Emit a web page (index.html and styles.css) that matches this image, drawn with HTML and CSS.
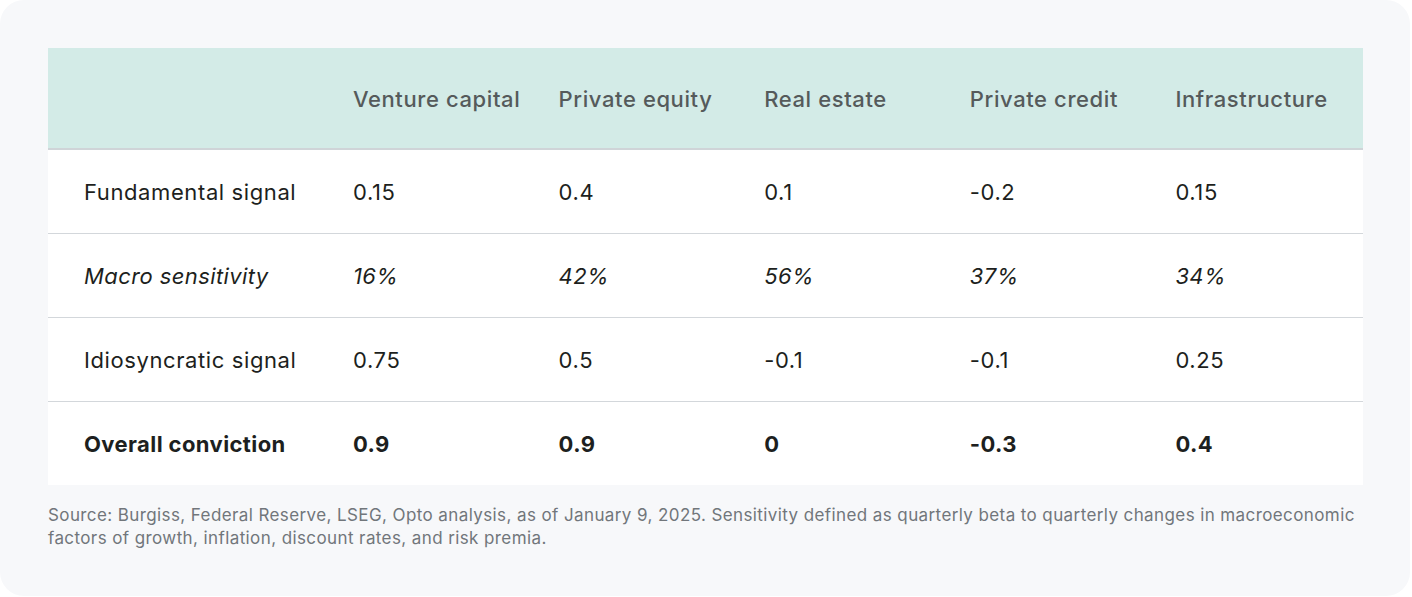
FILE: index.html
```html
<!DOCTYPE html>
<html lang="en">
<head>
<meta charset="utf-8">
<link rel="stylesheet" href="styles.css">
</head>
<body>
<div class="card">
  <table class="grid">
    <thead>
      <tr>
        <th class="label"></th>
        <th>Venture capital</th>
        <th>Private equity</th>
        <th>Real estate</th>
        <th>Private credit</th>
        <th>Infrastructure</th>
      </tr>
    </thead>
    <tbody>
      <tr>
        <td class="label">Fundamental signal</td>
        <td>0.15</td><td>0.4</td><td>0.1</td><td>-0.2</td><td>0.15</td>
      </tr>
      <tr class="italic">
        <td class="label">Macro sensitivity</td>
        <td>16%</td><td>42%</td><td>56%</td><td>37%</td><td>34%</td>
      </tr>
      <tr>
        <td class="label">Idiosyncratic signal</td>
        <td>0.75</td><td>0.5</td><td>-0.1</td><td>-0.1</td><td>0.25</td>
      </tr>
      <tr class="bold">
        <td class="label">Overall conviction</td>
        <td>0.9</td><td>0.9</td><td>0</td><td>-0.3</td><td>0.4</td>
      </tr>
    </tbody>
  </table>
  <p class="note">Source: Burgiss, Federal Reserve, LSEG, Opto analysis, as of January 9, 2025. Sensitivity defined as quarterly beta to quarterly changes in macroeconomic factors of growth, inflation, discount rates, and risk premia.</p>
</div>
</body>
</html>
```

FILE: styles.css
```css
html, body {
  margin: 0;
  padding: 0;
  background: #ffffff;
}
body {
  font-family: Inter, "Noto Sans", sans-serif;
}
.card {
  width: 1410px;
  height: 596px;
  box-sizing: border-box;
  background: #f7f8fa;
  border-radius: 24px;
  padding: 48px 47px 0 48px;
}
.grid {
  width: 1315px;
  border-collapse: collapse;
  table-layout: fixed;
  background: #ffffff;
}
.grid th, .grid td {
  text-align: left;
  padding: 0 0 0 18px;
  font-size: 22px;
  letter-spacing: 0.6px;
}
.grid th.label, .grid td.label {
  width: 251px;
  padding-left: 36px;
}
.grid thead th {
  background: #d3ebe7;
  color: #555a5b;
  font-weight: 500;
  height: 98px;
  border-bottom: 2px solid #cfd4d8;
  padding-top: 2px;
}
.grid tbody td {
  color: #1d1f20;
  font-weight: 400;
  height: 83px;
  border-top: 1px solid #d3d7db;
}
.grid tbody tr:first-child td {
  border-top: none;
}
.italic td { font-style: italic; letter-spacing: 0.4px; }
.bold td { font-weight: 700 !important; letter-spacing: 0.4px; }
.note {
  margin: 19px 0 0 0;
  font-size: 17px;
  line-height: 23px;
  color: #71767b;
  letter-spacing: 0.4px;
}
```
